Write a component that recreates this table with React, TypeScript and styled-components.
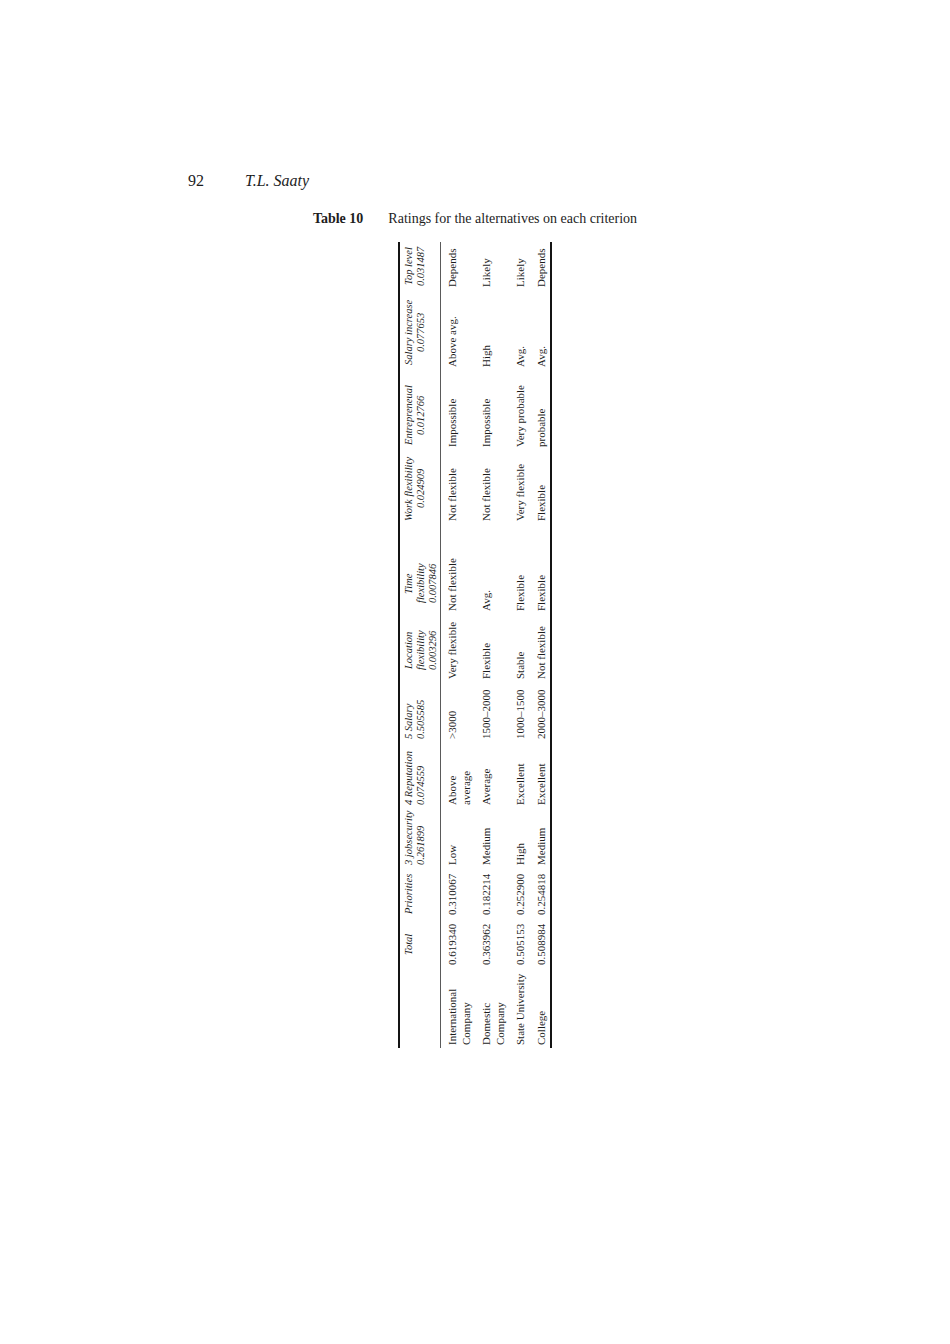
import React from 'react';
import styled, { createGlobalStyle } from 'styled-components';

const GlobalStyle = createGlobalStyle`
  html, body {
    margin: 0;
    padding: 0;
    background: #fff;
  }
  body {
    font-family: "Liberation Serif", "Times New Roman", serif;
    color: #1d1d1d;
  }
`;

const Page = styled.div`
  width: 950px;
  min-height: 1344px;
  box-sizing: border-box;
  padding-top: 171px;
  display: flex;
  flex-direction: column;
`;

const RunningHead = styled.header`
  display: flex;
  gap: 41px;
  padding-left: 188px;
  font-size: 16px;
  line-height: 20px;
`;

const Author = styled.span`
  font-style: italic;
`;

const Caption = styled.div`
  display: flex;
  justify-content: center;
  gap: 25px;
  margin-top: 19px;
  font-size: 14px;
  line-height: 18px;
`;

const CaptionLabel = styled.span`
  font-weight: bold;
`;

const TableWrap = styled.div`
  display: flex;
  justify-content: center;
  margin-top: 14px;
`;

// the table is printed sideways: laid out in a vertical writing mode, then turned round
const Table = styled.table`
  writing-mode: vertical-rl;
  transform: rotate(180deg);
  table-layout: fixed;
  border-collapse: separate;
  border-spacing: 0;
  border-block-start: 2px solid #141414;
  border-block-end: 2px solid #141414;
  inline-size: 806px;
  font-size: 11px;
`;

const HeadCell = styled.th<{ $size: number; $end: number; $align?: 'start' | 'center' }>`
  box-sizing: border-box;
  inline-size: ${(p) => p.$size}px;
  font-weight: normal;
  font-style: italic;
  font-size: 10.5px;
  line-height: 12px;
  text-align: ${(p) => p.$align ?? 'center'};
  vertical-align: top;
  padding-block: 3px 1px;
  padding-inline: 3px ${(p) => p.$end}px;
  border-block-end: 1px solid #5a5a5a;
  white-space: nowrap;
`;

const Cell = styled.td`
  text-align: start;
  vertical-align: top;
  line-height: 13.5px;
  padding-block: 5px 2px;
  padding-inline: 3px 0;
  white-space: nowrap;
`;

type Column = { head: string; size: number; end: number; align?: 'start' | 'center' };

const columns: Column[] = [
  { head: '', size: 80, end: 0, align: 'start' },
  { head: 'Total', size: 50, end: 6 },
  { head: 'Priorities', size: 50, end: 4 },
  { head: '3 jobsecurity|0.261899', size: 60, end: 2, align: 'start' },
  { head: '4 Reputation|0.074559', size: 66, end: 4, align: 'start' },
  { head: '5 Salary|0.505585', size: 60, end: 4, align: 'start' },
  { head: 'Location|flexibility|0.003296', size: 68, end: 8 },
  { head: 'Time|flexibility|0.007846', size: 90, end: 32 },
  { head: 'Work flexibility|0.024909', size: 74, end: 6 },
  { head: 'Entrepreneual|0.012766', size: 80, end: 14 },
  { head: 'Salary increase|0.077653', size: 80, end: 8 },
  { head: 'Top level|0.031487', size: 48, end: 4 },
];

const rows: string[][] = [
  ['International|Company', '0.619340', '0.310067', 'Low', 'Above|average', '>3000', 'Very flexible', 'Not flexible', 'Not flexible', 'Impossible', 'Above avg.', 'Depends'],
  ['Domestic|Company', '0.363962', '0.182214', 'Medium', 'Average', '1500–2000', 'Flexible', 'Avg.', 'Not flexible', 'Impossible', 'High', 'Likely'],
  ['State University', '0.505153', '0.252900', 'High', 'Excellent', '1000–1500', 'Stable', 'Flexible', 'Very flexible', 'Very probable', 'Avg.', 'Likely'],
  ['College', '0.508984', '0.254818', 'Medium', 'Excellent', '2000–3000', 'Not flexible', 'Flexible', 'Flexible', 'probable', 'Avg.', 'Depends'],
];

const Lines: React.FC<{ text: string }> = ({ text }) => (
  <>
    {text.split('|').map((line, i) => (
      <React.Fragment key={i}>
        {i > 0 && <br />}
        {line}
      </React.Fragment>
    ))}
  </>
);

const App: React.FC = () => {
  return (
    <Page>
      <GlobalStyle />
      <RunningHead>
        <span>92</span>
        <Author>T.L. Saaty</Author>
      </RunningHead>
      <Caption>
        <CaptionLabel>Table 10</CaptionLabel>
        <span>Ratings for the alternatives on each criterion</span>
      </Caption>
      <TableWrap>
        <Table>
          <thead>
            <tr>
              {columns.map((c, i) => (
                <HeadCell key={i} $size={c.size} $end={c.end} $align={c.align}>
                  <Lines text={c.head} />
                </HeadCell>
              ))}
            </tr>
          </thead>
          <tbody>
            {rows.map((row, r) => (
              <tr key={r}>
                {row.map((c, i) => (
                  <Cell key={i}>
                    <Lines text={c} />
                  </Cell>
                ))}
              </tr>
            ))}
          </tbody>
        </Table>
      </TableWrap>
    </Page>
  );
};

export default App;
